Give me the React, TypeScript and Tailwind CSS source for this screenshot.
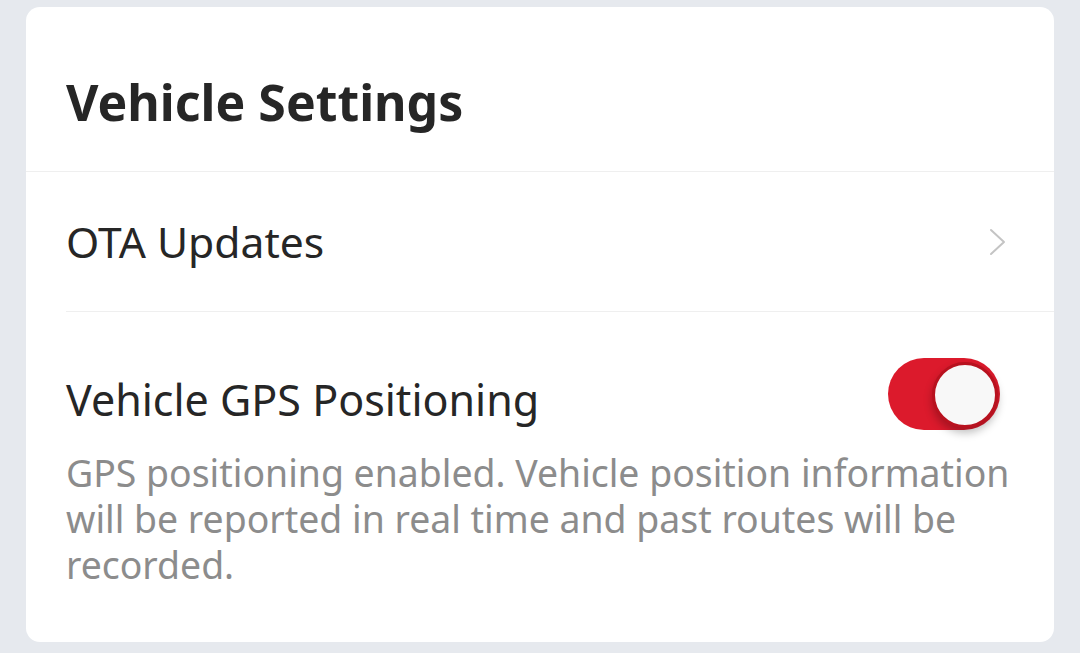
import React from 'react';

const Toggle: React.FC<{ on: boolean }> = ({ on }) => (
  <div className={`relative w-[112px] h-[72px] rounded-full ${on ? 'bg-[#dc1a2c]' : 'bg-gray-300'}`}>
    <div className="absolute right-[2px] top-[4px] w-[66px] h-[66px] rounded-full bg-[#f8f8f8] border-[3px] border-[#b8121f] shadow-[0_5px_8px_rgba(0,0,0,0.25)]" />
  </div>
);

const Chevron = () => (
  <svg width="20" height="28" viewBox="0 0 20 28" fill="none" stroke="#c4c4c4" strokeWidth="2" strokeLinecap="round" strokeLinejoin="round">
    <path d="M3 2 L16 14 L3 26" />
  </svg>
);

export default function App() {
  return (
    <div className="w-[1080px] h-[653px] bg-[#e6e9ee] pt-[7px] pl-[26px] pr-[26px] font-['Noto_Sans',sans-serif]">
      <div className="bg-white rounded-[14px] h-[635px] flex flex-col">
        <div className="h-[165px] flex items-center px-[40px] pt-[26px] border-b border-[#efefef]">
          <h1 className="text-[50px] font-bold text-[#262626] leading-none">Vehicle Settings</h1>
        </div>
        <div className="ml-[40px] h-[140px] flex items-center justify-between pr-[46px] border-b border-[#efefef]">
          <span className="text-[42.6px] text-[#262626] leading-none">OTA Updates</span>
          <Chevron />
        </div>
        <div className="px-[40px] pt-[46px]">
          <div className="flex items-center justify-between pr-[14px]">
            <span className="text-[43px] text-[#262626] leading-none pt-[10px]">Vehicle GPS Positioning</span>
            <Toggle on />
          </div>
          <p className="mt-[20px] text-[37.4px] leading-[46px] text-[#8c8c8c] pr-[4px]">
            GPS positioning enabled. Vehicle position information will be reported in real time and past routes will be recorded.
          </p>
        </div>
      </div>
    </div>
  );
}
